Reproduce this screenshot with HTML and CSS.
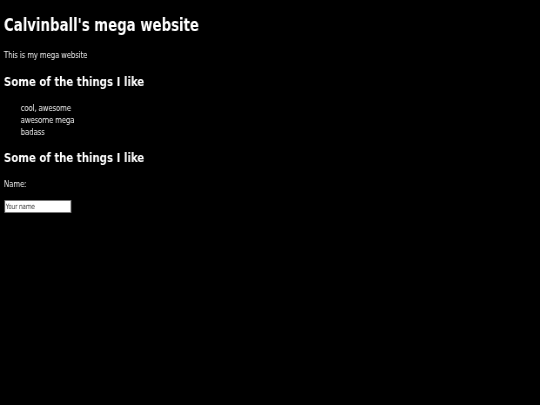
FILE: index.html
```html
<!DOCTYPE html>
<html>
<head>
<meta charset="utf-8">
<link rel="stylesheet" href="styles.css">
</head>
<body>
<div class="page">
<h1 class="title">Calvinball's mega website</h1>
<p class="intro">This is my mega website</p>
<h2 class="section">Some of the things I like</h2>
<ul class="likes">
  <li>cool, awesome</li>
  <li>awesome mega</li>
  <li>badass</li>
</ul>
<h2 class="section">Some of the things I like</h2>
<form class="name-form">
  <label class="label" for="name">Name:</label>
  <input class="name-input" id="name" type="text" placeholder="Your name">
</form>
</div>
</body>
</html>
```
FILE: styles.css
```css
html, body {
  background: #000;
}
body {
  margin: 0;
  color: #ececec;
  font-family: "DejaVu Sans Condensed", "DejaVu Sans", sans-serif;
  font-size: 9px;
  letter-spacing: -0.2px;
  line-height: 11.65px;
}
.page {
  padding: 0 4.6px;
  transform: scaleX(0.87);
  transform-origin: 0 0;
  will-change: transform;
}
.title {
  font-size: 17px;
  letter-spacing: 0;
  line-height: 23.3px;
  color: #fff;
  margin: 13.5px 0 12.4px;
}
.intro {
  margin: 0 0 11.7px;
}
.section {
  font-size: 13px;
  letter-spacing: 0;
  line-height: 17.8px;
  color: #fff;
  margin: 0 0 12.6px;
}
.likes {
  list-style: none;
  padding-left: 19.2px;
  margin: 0 0 10.4px;
}
.name-form {
  margin: 0;
}
.label {
  display: block;
  margin: 0 0 9.2px;
}
.name-input {
  display: block;
  box-sizing: border-box;
  width: 77px;
  height: 13px;
  padding: 0 1px;
  border: 1px solid #767676;
  background: #fff;
  font-family: "DejaVu Sans Condensed", "DejaVu Sans", sans-serif;
  font-size: 7.4px;
  letter-spacing: -0.2px;
  color: #000;
}
.name-input::placeholder {
  color: #444;
}
```
